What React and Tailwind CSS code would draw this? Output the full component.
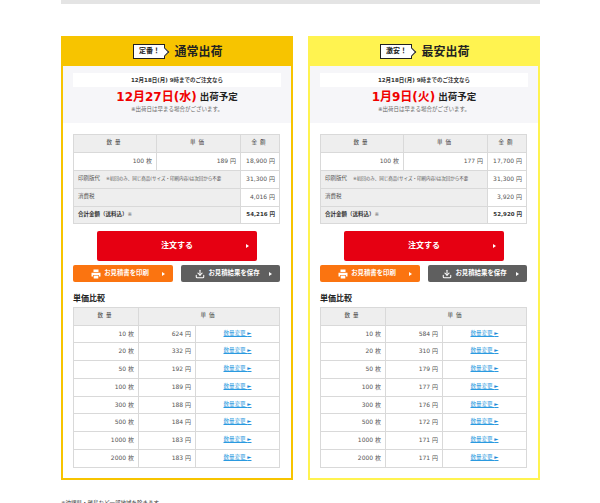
import { Download } from 'lucide-react';

const plans = [
    {
        tag: '定番！', title: '通常出荷', head: 'bg-[#f7c400]', border: 'border-[#f7c400]',
        date: '12月27日(水)', qty: '100 枚', unit: '189 円', sub: '18,900 円', tax: '4,016 円', total: '54,216 円',
        prices: ['624 円', '332 円', '192 円', '189 円', '188 円', '184 円', '183 円', '183 円'],
    },
    {
        tag: '激安！', title: '最安出荷', head: 'bg-[#fff350]', border: 'border-[#fff350]',
        date: '1月9日(火)', qty: '100 枚', unit: '177 円', sub: '17,700 円', tax: '3,920 円', total: '52,920 円',
        prices: ['584 円', '310 円', '179 円', '177 円', '176 円', '172 円', '171 円', '171 円'],
    },
];

const amounts = ['10 枚', '20 枚', '50 枚', '100 枚', '300 枚', '500 枚', '1000 枚', '2000 枚'];
// row lines in the picture are not evenly spaced
const rowHeights = ['h-[17px]', 'h-[18px]', 'h-[18px]', 'h-[18px]', 'h-[17px]', 'h-[18px]', 'h-[18px]', 'h-[18px]'];

const th = 'border border-[#d9d9d9] bg-[#eeeeee] font-normal text-center text-[#444] tracking-[3px] pb-[2px]';
const td = 'border border-[#d9d9d9] text-right text-[#555] px-[4px] pb-[2px] text-[6px] whitespace-nowrap';

function Arrow() {
    return <span className="absolute right-[8px] top-1/2 -translate-y-1/2 w-0 h-0 border-y-[2px] border-y-transparent border-l-[3px] border-l-white" />;
}

function PrinterIcon() {
    return (
        <svg width="10" height="10" viewBox="0 0 10 10" fill="white">
            <rect x="2.5" y="0.5" width="5" height="2.5" />
            <path d="M0.5 3.8h9v3.7h-1.6v-1.5h-5.8v1.5h-1.6z" />
            <rect x="2.7" y="6.6" width="4.6" height="2.9" />
        </svg>
    );
}

function Card({ plan }) {
    return (
        <div className={`w-[232px] h-[444px] border-2 ${plan.border} bg-white`}>
            {/* Header */}
            <div className={`${plan.head} h-[29px] -mt-px flex items-center justify-center gap-[6px] pl-[2px]`}>
                <div className="relative w-[32px] h-[15px] bg-white border border-[#222] flex items-center justify-center text-[7px] font-bold text-[#222]">
                    {plan.tag}
                    <span className="absolute -right-[4px] top-[4px] w-[6px] h-[6px] bg-white border-t border-r border-[#222] rotate-45" />
                </div>
                <span className="ml-[3px] text-[12px] font-bold text-[#222] leading-none">{plan.title}</span>
            </div>

            {/* Delivery date */}
            <div className="bg-[#f6f6f9] h-[57px] pt-[7px] px-[10px] text-center">
                <div className="bg-white h-[14px] leading-[14px] text-[5.5px] font-bold text-[#333]">12月18日(月) 9時までのご注文なら</div>
                <div className="h-[19px] flex items-center justify-center gap-[3px] font-bold">
                    <span className="text-[12px] text-[#f00000]">{plan.date}</span>
                    <span className="text-[9.5px] text-[#222] mt-[2px]">出荷予定</span>
                </div>
                <div className="text-[5.5px] leading-[7px] text-[#666]">※出荷日は早まる場合がございます。</div>
            </div>

            <div className="px-[10px] pt-[11px]">
                {/* Price table */}
                <table className="w-[206px] table-fixed border-collapse text-[5.5px]">
                    <colgroup>
                        <col className="w-[83px]" />
                        <col className="w-[84px]" />
                        <col className="w-[39px]" />
                    </colgroup>
                    <tbody>
                        <tr className="h-[18px]">
                            <th className={th}>数量</th>
                            <th className={th}>単価</th>
                            <th className={th}>金額</th>
                        </tr>
                        <tr className="h-[18px]">
                            <td className={td}>{plan.qty}</td>
                            <td className={td}>{plan.unit}</td>
                            <td className={td}>{plan.sub}</td>
                        </tr>
                        <tr className="h-[18px]">
                            <td colSpan={2} className="border border-[#d9d9d9] bg-[#eeeeee] text-[#555] px-[4px] pb-[2px] whitespace-nowrap">
                                印刷版代<span className="ml-[6px] text-[4.5px]">※初回のみ、同じ商品(サイズ・印刷内容)は次回から不要</span>
                            </td>
                            <td className={td}>31,300 円</td>
                        </tr>
                        <tr className="h-[18px]">
                            <td colSpan={2} className="border border-[#d9d9d9] bg-[#eeeeee] text-[#555] px-[4px] pb-[2px]">消費税</td>
                            <td className={td}>{plan.tax}</td>
                        </tr>
                        <tr className="h-[17px]">
                            <td colSpan={2} className="border border-[#d9d9d9] bg-[#eeeeee] text-[#333] font-bold px-[4px] pb-[2px]">
                                合計金額（送料込）<span className="font-normal text-[#777]">※</span>
                            </td>
                            <td className="border border-[#d9d9d9] text-right text-[#333] font-bold px-[4px] pb-[2px] text-[5.5px] whitespace-nowrap">{plan.total}</td>
                        </tr>
                    </tbody>
                </table>

                {/* Buttons */}
                <div className="relative mt-[7px] mx-auto w-[160px] h-[30px] rounded-[2px] bg-[#e60012] flex items-center justify-center text-[8px] font-bold text-white">
                    注文する
                    <Arrow />
                </div>
                <div className="mt-[4px] w-[207px] flex justify-between">
                    <div className="relative w-[100px] h-[17px] rounded-[2px] bg-[#fb7410] flex items-center justify-center gap-[3px] pr-[6px] text-[6.4px] font-bold text-white">
                        <PrinterIcon />
                        お見積書を印刷
                        <Arrow />
                    </div>
                    <div className="relative w-[99px] h-[17px] rounded-[2px] bg-[#5f5f5f] flex items-center justify-center gap-[3px] pr-[6px] text-[6.4px] font-bold text-white">
                        <Download size={10} strokeWidth={2.5} />
                        お見積結果を保存
                        <Arrow />
                    </div>
                </div>

                {/* Unit price comparison */}
                <div className="mt-[11px] h-[12px] leading-[12px] text-[8px] font-bold text-[#222]">単価比較</div>
                <table className="mt-[2px] w-[206px] table-fixed border-collapse text-[5.5px]">
                    <colgroup>
                        <col className="w-[65px]" />
                        <col className="w-[57px]" />
                        <col className="w-[84px]" />
                    </colgroup>
                    <tbody>
                        <tr className="h-[18px]">
                            <th className={th}>数量</th>
                            <th colSpan={2} className={th}>単価</th>
                        </tr>
                        {amounts.map((amount, i) => (
                            <tr key={amount} className={rowHeights[i]}>
                                <td className={td}>{amount}</td>
                                <td className={td}>{plan.prices[i]}</td>
                                <td className="border border-[#d9d9d9] text-center pb-[2px]">
                                    <span className="text-[#2a9ae0] underline">数量変更 <span className="text-[#1b8ad8]">►</span></span>
                                </td>
                            </tr>
                        ))}
                    </tbody>
                </table>
            </div>
        </div>
    );
}

export default function App() {
    return (
        <div className="w-[600px] h-[503px] overflow-hidden bg-white font-['DejaVu_Sans','Noto_Sans_CJK_JP',sans-serif]">
            <div className="ml-[61px] w-[479px]">
                <div className="h-[4px] bg-[#e4e4e4]" />
                <div className="mt-[32px] flex gap-[15px]">
                    {plans.map((plan) => <Card key={plan.title} plan={plan} />)}
                </div>
                <p className="mt-[19px] text-[5.5px] leading-[9px] text-[#333]">※沖縄県・離島など一部地域を除きます</p>
            </div>
        </div>
    );
}
